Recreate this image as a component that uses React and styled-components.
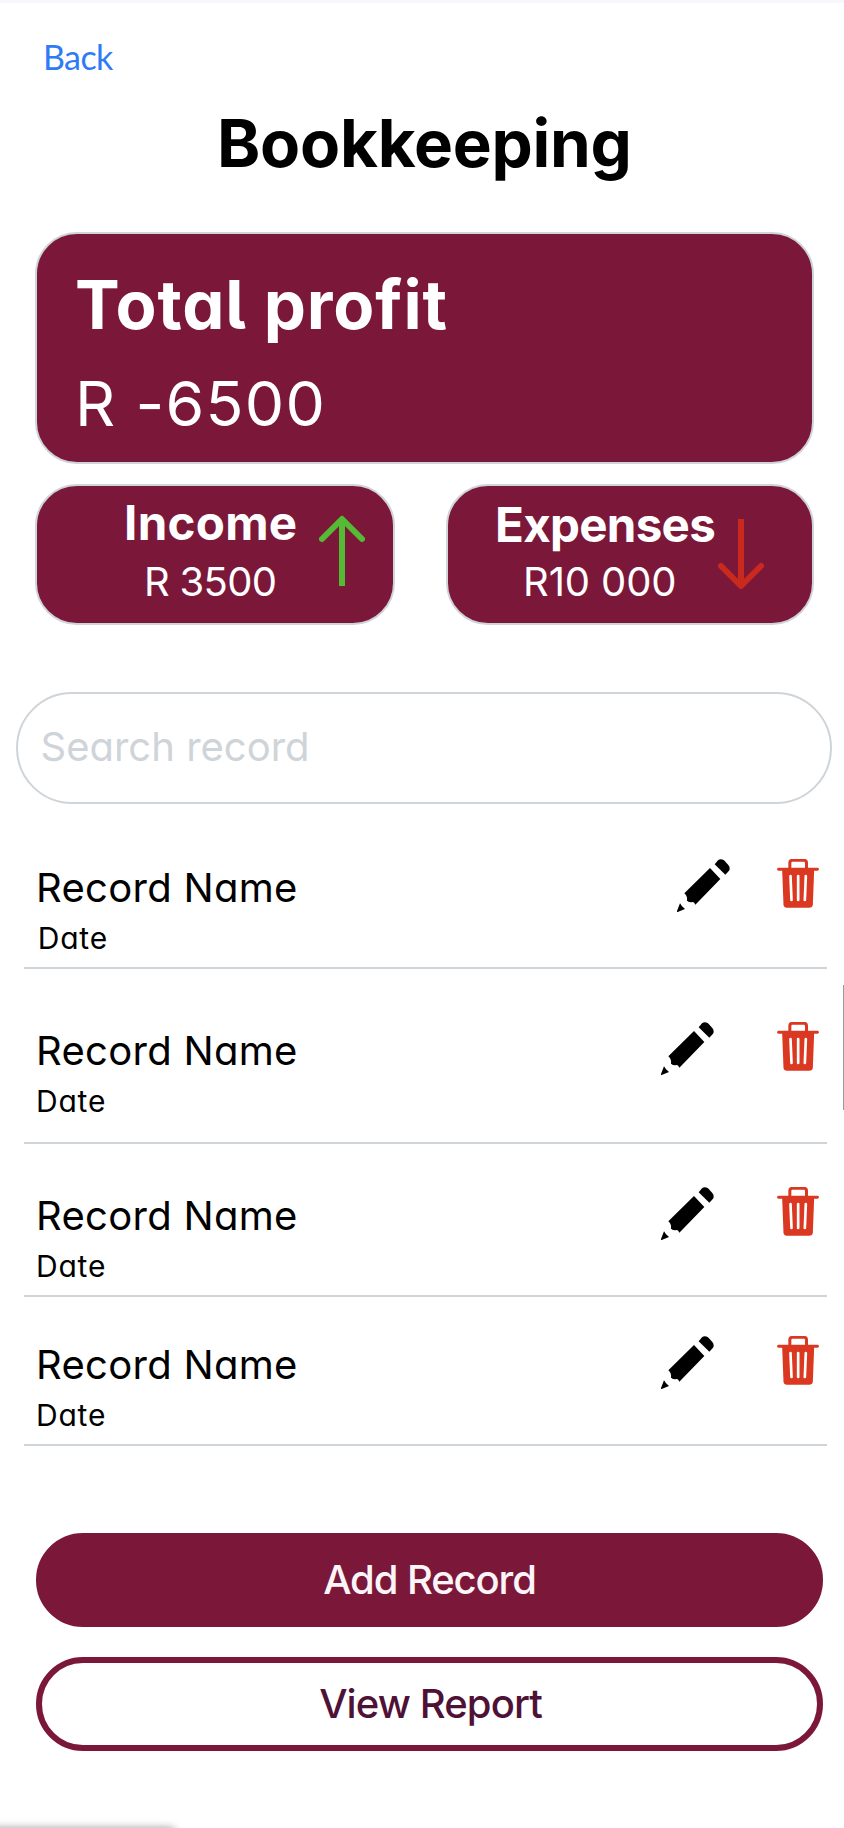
import React from "react";
import styled, { createGlobalStyle } from "styled-components";

const WINE = "#7b183a";
const LINE = "#cfd4d9";

const GlobalStyle = createGlobalStyle`
  * { box-sizing: border-box; }
  body {
    margin: 0;
    background: #fff;
    font-family: Inter, "Liberation Sans", sans-serif;
    font-feature-settings: "cv11", "cv05";
  }
`;

const Screen = styled.div`
  position: relative;
  width: 844px;
  height: 1828px;
  overflow: hidden;
  background: #fff;
  border-top: 3px solid #f6f8fb;
`;

const BackLink = styled.a`
  display: block;
  width: max-content;
  margin: 33px 0 0 43px;
  font: 400 34px/42px Lato, sans-serif;
  letter-spacing: -0.6px;
  color: #2f7bf6;
  text-decoration: none;
`;

const Title = styled.h1`
  margin: 26px 0 0 217px;
  font-size: 65.5px;
  font-weight: 700;
  line-height: 80px;
  letter-spacing: -0.25px;
  font-feature-settings: normal;
  white-space: nowrap;
`;

const Card = styled.section`
  background: ${WINE};
  border: 2px solid ${LINE};
  border-radius: 42px;
  color: #fff;
  white-space: nowrap;
`;

const ProfitCard = styled(Card)`
  width: 779px;
  height: 232px;
  margin: 48px 0 0 35px;
  padding: 31px 0 0 38px;
`;

const ProfitLabel = styled.h2`
  margin: 0;
  font-size: 67px;
  font-weight: 700;
  line-height: 80px;
  letter-spacing: 0.9px;
`;

const ProfitValue = styled.p`
  margin: 18px 0 0;
  font-size: 62.5px;
  font-weight: 400;
  line-height: 80px;
  letter-spacing: 1.3px;
`;

const CardRow = styled.div`
  display: flex;
  justify-content: space-between;
  margin: 20px 30px 0 35px;
`;

const StatCard = styled(Card)`
  display: flex;
  width: ${(p) => p.$width}px;
  height: 141px;
  padding-left: ${(p) => p.$inset}px;
`;

const StatText = styled.div`
  width: ${(p) => p.$width}px;
  padding-top: ${(p) => p.$top}px;
`;

const StatLabel = styled.h3`
  margin: 0;
  font-size: 47.5px;
  font-weight: 700;
  line-height: 56px;
  letter-spacing: ${(p) => p.$spacing}px;
`;

const StatValue = styled.p`
  margin: ${(p) => p.$gap}px 0 0 ${(p) => p.$indent}px;
  font-size: 40px;
  font-weight: 400;
  line-height: 48px;
  letter-spacing: ${(p) => p.$spacing}px;
`;

const Arrow = styled.svg`
  flex: none;
  width: 46px;
  height: 72px;
  margin-top: ${(p) => p.$top}px;
  fill: none;
  stroke: ${(p) => p.$color};
  stroke-width: 6;
`;

const Search = styled.input`
  display: block;
  width: 816px;
  height: 112px;
  margin: 67px 0 0 16px;
  padding: 0 22.5px 4px;
  border: 2px solid ${LINE};
  border-radius: 56px;
  background: #fff;
  font: 400 40px/48px Inter, sans-serif;
  font-feature-settings: inherit;
  letter-spacing: 0;
  &::placeholder { color: ${LINE}; opacity: 1; }
`;

const List = styled.ul`
  list-style: none;
  margin: 0 17px 0 24px;
  padding: 0;
`;

const Row = styled.li`
  display: flex;
  height: ${(p) => p.$height}px;
  padding-top: ${(p) => p.$top}px;
  border-bottom: 2px solid ${LINE};
`;

const RowText = styled.div`
  flex: 1;
  padding: 5px 0 0 12px;
  white-space: nowrap;
`;

const RecordName = styled.div`
  font-size: 40px;
  line-height: 48px;
  letter-spacing: 0.3px;
`;

const RecordDate = styled.div`
  margin: 8px 0 0 ${(p) => p.$indent}px;
  font-size: 30px;
  line-height: 36px;
  letter-spacing: 0.8px;
`;

const IconButton = styled.button`
  align-self: flex-start;
  margin: 0 ${(p) => p.$right}px 0 0;
  padding: 0;
  border: 0;
  background: none;
  line-height: 0;
`;

const Actions = styled.div`
  display: flex;
  flex-direction: column;
  gap: 30px;
  margin: 87px 21px 0 36px;
`;

const ActionButton = styled.button`
  height: 94px;
  padding: 0 0 0 ${(p) => (p.$outline ? 2 : 0)}px;
  border: 6px solid ${WINE};
  border-radius: 47px;
  background: ${(p) => (p.$outline ? "#fff" : WINE)};
  color: ${(p) => (p.$outline ? "#4f1237" : "#fbf5f8")};
  font: 500 40px/48px Inter, sans-serif;
  font-feature-settings: inherit;
  letter-spacing: ${(p) => p.$spacing}px;
`;

const ScrollThumb = styled.div`
  position: absolute;
  top: 982px;
  right: 0;
  width: 1px;
  height: 125px;
  background: #999;
`;

const StatusBubble = styled.div`
  position: absolute;
  left: -10px;
  top: 1825px;
  width: 186px;
  height: 20px;
  border-radius: 6px;
  box-shadow: 0 0 9px rgba(0, 0, 0, 0.4);
`;

const Pencil = () => (
  <svg width="53" height="53" viewBox="112 57 159 159" fill="#000">
    <path d="M225 73 L235 61 Q243 54 253 61 L266 75 Q273 84 268 92 L257 104Z" />
    <path d="M211 84 L242 117 L167 194 Q164 187 160 186 Q149 188 142 182 Q144 169 134 160Z" />
    <path d="M121 190 Q126 200 136 207 L114 216 Q111 216 112 213Z" />
  </svg>
);

const Trash = () => (
  <svg width="42" height="49" viewBox="412 57 125 147" fill="#da3820">
    <path d="M450 87 V69 Q450 61 458 61 H492 Q500 61 500 69 V87" fill="none" stroke="#da3820" strokeWidth="9" />
    <rect x="412" y="83.5" width="125" height="8.5" rx="4" />
    <path d="M427 90 H523 L519 194 Q518 203 508 203 H441 Q432 203 431 194Z" />
    <path d="M452 108 L455 180 M475 108 V180 M498 108 L495 180" stroke="#fff" strokeWidth="8" strokeLinecap="round" />
  </svg>
);

const records = [
  { id: 1, top: 55, height: 165, indent: 1.7, gap: 47.5 },
  { id: 2, top: 53, height: 175, indent: 0, gap: 63.5 },
  { id: 3, top: 43, height: 153, indent: 0, gap: 63.5 },
  { id: 4, top: 39, height: 149, indent: 0, gap: 63.5 },
];

export default function App() {
  return (
    <Screen>
      <GlobalStyle />
      <BackLink>Back</BackLink>
      <Title>Bookkeeping</Title>
      <ProfitCard>
        <ProfitLabel>Total profit</ProfitLabel>
        <ProfitValue>R -6500</ProfitValue>
      </ProfitCard>
      <CardRow>
        <StatCard $width={360} $inset={87}>
          <StatText $width={195} $top={8.5}>
            <StatLabel $spacing={0.3}>Income</StatLabel>
            <StatValue $gap={7.5} $indent={20} $spacing={-0.7}>R 3500</StatValue>
          </StatText>
          <Arrow $color="#56bb34" $top={29} viewBox="0 0 46 72">
            <path d="M23 71 V5" />
            <path d="M3 24 L23 4 L43 24" strokeLinecap="round" strokeLinejoin="round" />
          </Arrow>
        </StatCard>
        <StatCard $width={368} $inset={47}>
          <StatText $width={223} $top={10.5}>
            <StatLabel $spacing={-0.7}>Expenses</StatLabel>
            <StatValue $gap={5.5} $indent={28} $spacing={-0.1}>R10 000</StatValue>
          </StatText>
          <Arrow $color="#c92a1d" $top={32} viewBox="0 0 46 72">
            <path d="M23 1 V67" />
            <path d="M3 48 L23 68 L43 48" strokeLinecap="round" strokeLinejoin="round" />
          </Arrow>
        </StatCard>
      </CardRow>
      <Search placeholder="Search record" />
      <List>
        {records.map((r) => (
          <Row key={r.id} $top={r.top} $height={r.height}>
            <RowText>
              <RecordName>Record Name</RecordName>
              <RecordDate $indent={r.indent}>Date</RecordDate>
            </RowText>
            <IconButton aria-label="Edit" $right={r.gap}><Pencil /></IconButton>
            <IconButton aria-label="Delete" $right={8}><Trash /></IconButton>
          </Row>
        ))}
      </List>
      <Actions>
        <ActionButton $spacing={-1.1}>Add Record</ActionButton>
        <ActionButton $outline $spacing={-0.9}>View Report</ActionButton>
      </Actions>
      <ScrollThumb />
      <StatusBubble />
    </Screen>
  );
}
